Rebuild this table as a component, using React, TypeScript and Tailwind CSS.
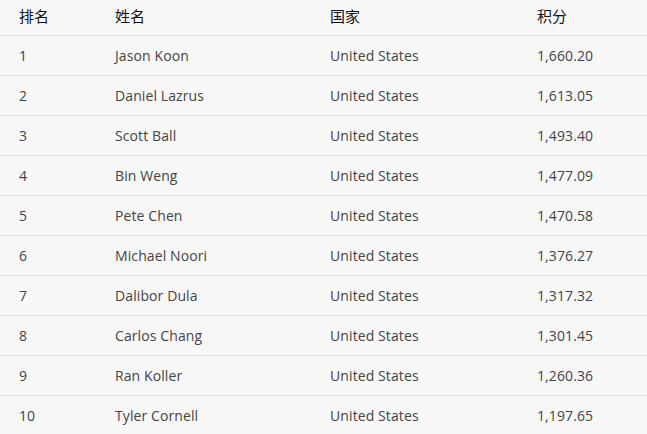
import React from 'react';

interface Player {
  rank: number;
  name: string;
  country: string;
  points: string;
}

const players: Player[] = [
  { rank: 1, name: 'Jason Koon', country: 'United States', points: '1,660.20' },
  { rank: 2, name: 'Daniel Lazrus', country: 'United States', points: '1,613.05' },
  { rank: 3, name: 'Scott Ball', country: 'United States', points: '1,493.40' },
  { rank: 4, name: 'Bin Weng', country: 'United States', points: '1,477.09' },
  { rank: 5, name: 'Pete Chen', country: 'United States', points: '1,470.58' },
  { rank: 6, name: 'Michael Noori', country: 'United States', points: '1,376.27' },
  { rank: 7, name: 'Dalibor Dula', country: 'United States', points: '1,317.32' },
  { rank: 8, name: 'Carlos Chang', country: 'United States', points: '1,301.45' },
  { rank: 9, name: 'Ran Koller', country: 'United States', points: '1,260.36' },
  { rank: 10, name: 'Tyler Cornell', country: 'United States', points: '1,197.65' }
];

const cols = 'grid grid-cols-[96px_215px_207px_1fr] pl-[19px] items-center';

const App: React.FC = () => {
  return (
    <div
      className="w-[647px] h-[434px] overflow-hidden bg-[#f7f7f7] text-[14px]"
      style={{ fontFamily: '"Open Sans", "Noto Sans CJK SC", sans-serif' }}
    >
      <div className={`${cols} h-[36px] border-b border-[#e3e3e3] text-[15px] text-[#111] pb-[2px]`}>
        <div>排名</div>
        <div>姓名</div>
        <div>国家</div>
        <div>积分</div>
      </div>
      {players.map((p) => (
        <div
          key={p.rank}
          className={`${cols} h-[40px] border-b border-[#e3e3e3] text-[#444] tracking-[0.1px]`}
        >
          <div>{p.rank}</div>
          <div>{p.name}</div>
          <div>{p.country}</div>
          <div>{p.points}</div>
        </div>
      ))}
    </div>
  );
};

export default App;
